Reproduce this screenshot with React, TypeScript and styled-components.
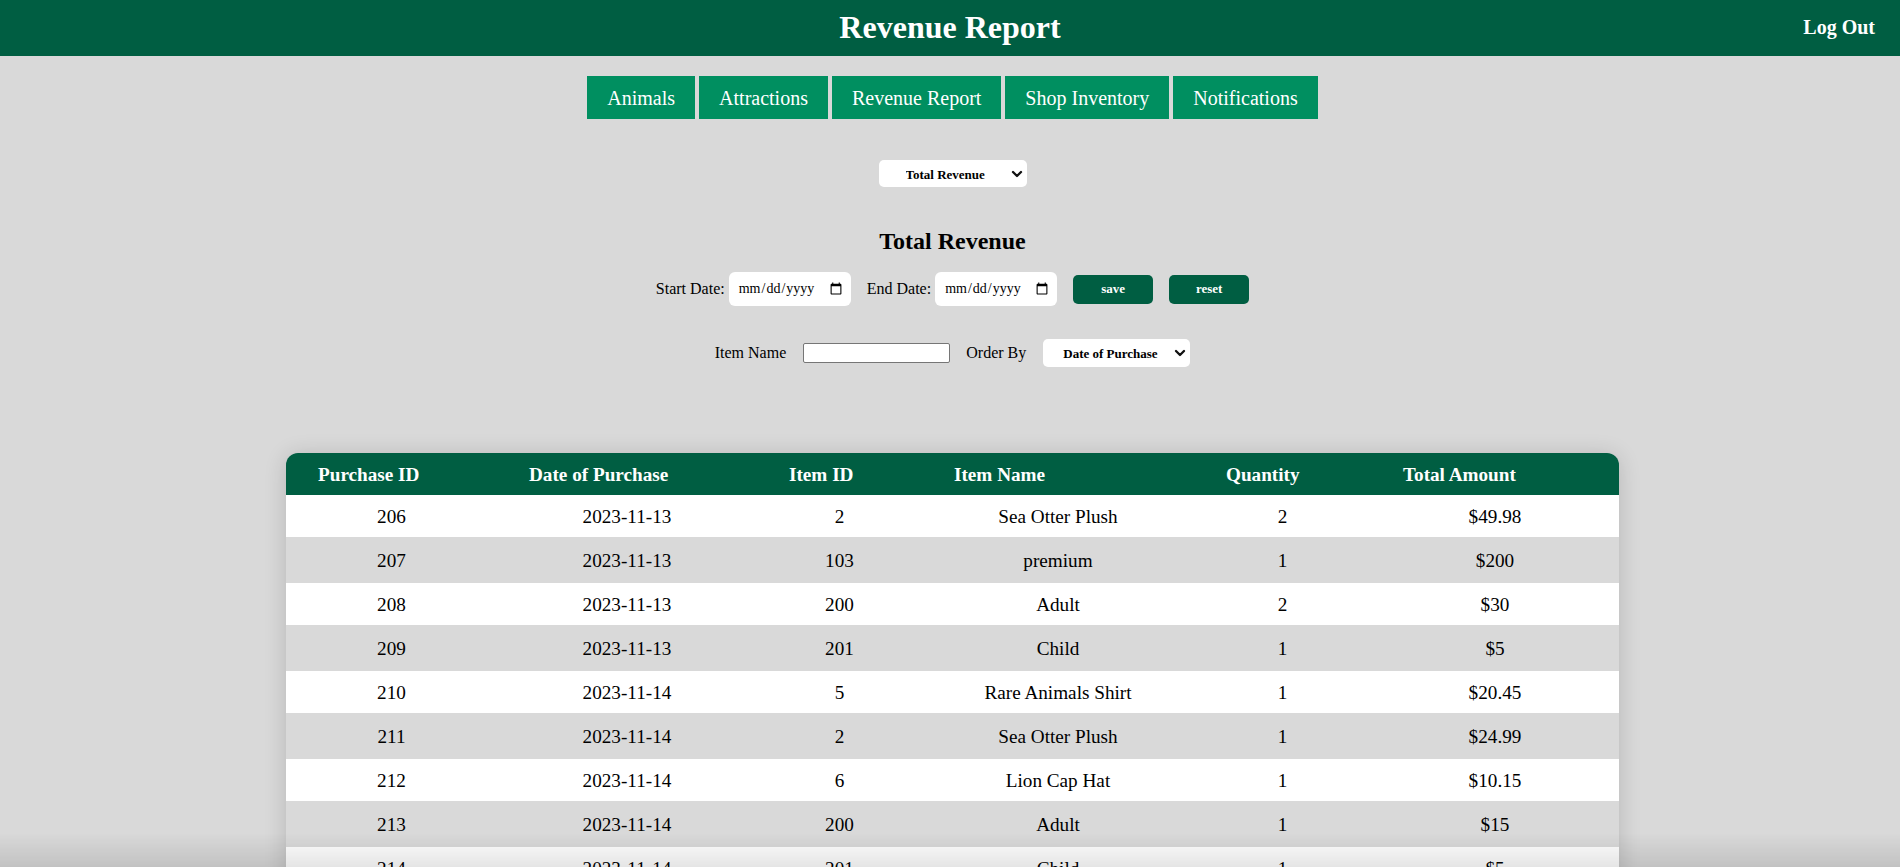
import React from "react";
import styled, { createGlobalStyle } from "styled-components";
import { ChevronDown } from "lucide-react";

const GlobalStyle = createGlobalStyle`
  html, body {
    margin: 0;
    padding: 0;
    background: #d9d9d9;
    font-family: "Liberation Serif", "Times New Roman", serif;
    color: #000;
  }
  * { box-sizing: border-box; }
`;

const TopBar = styled.header`
  height: 56px;
  background: #005e42;
  display: grid;
  grid-template-columns: 1fr auto 1fr;
  align-items: center;
  padding: 0 25px;
  color: #fff;
`;

const Title = styled.h1`
  grid-column: 2;
  margin: 0 0 2px;
  font-size: 32px;
  font-weight: bold;
`;

const LogOut = styled.a`
  grid-column: 3;
  justify-self: end;
  font-size: 20px;
  font-weight: bold;
  color: #fff;
  text-decoration: none;
  margin-bottom: 2px;
`;

const Main = styled.main`
  padding-left: 5px;
  display: flex;
  flex-direction: column;
  align-items: center;
`;

const Nav = styled.nav`
  margin-top: 20px;
  display: flex;
  gap: 4px;
`;

const NavButton = styled.button`
  background: #008f60;
  color: #fff;
  border: none;
  font-family: inherit;
  font-size: 20px;
  line-height: 23px;
  padding: 11px 20px 9px;
  cursor: pointer;
`;

const SelectWrap = styled.div<{ $w: number; $h: number; $mt: number }>`
  position: relative;
  width: ${(p) => p.$w}px;
  height: ${(p) => p.$h}px;
  margin-top: ${(p) => p.$mt}px;
`;

const Select = styled.select<{ $pl: number }>`
  appearance: none;
  -webkit-appearance: none;
  width: 100%;
  height: 100%;
  background: #fff;
  border: none;
  border-radius: 5px;
  font-family: inherit;
  font-weight: bold;
  font-size: 13px;
  color: #000;
  padding: 1px 24px 0 ${(p) => p.$pl}px;
  outline: none;
`;

const Chevron = styled(ChevronDown)`
  position: absolute;
  right: 2px;
  top: 50%;
  transform: translateY(-50%);
  pointer-events: none;
  color: #111;
`;

const SubTitle = styled.h2`
  margin: 41px 0 0;
  font-size: 24px;
  font-weight: bold;
`;

const Row = styled.div<{ $mt: number; $h: number }>`
  display: flex;
  align-items: center;
  margin-top: ${(p) => p.$mt}px;
  height: ${(p) => p.$h}px;
`;

const Label = styled.label<{ $ml?: number; $mr?: number }>`
  font-size: 16px;
  margin-left: ${(p) => p.$ml ?? 0}px;
  margin-right: ${(p) => p.$mr ?? 0}px;
`;

const DateInput = styled.input`
  width: 122px;
  height: 34px;
  border: none;
  border-radius: 6px;
  background: #fff;
  font-family: inherit;
  font-size: 14px;
  padding: 0 6px 0 9px;
  color: #000;
`;

const ActionButton = styled.button`
  width: 80px;
  height: 29px;
  margin-left: 16px;
  background: #005e42;
  color: #fff;
  border: none;
  border-radius: 5px;
  font-family: inherit;
  font-weight: bold;
  font-size: 13px;
  cursor: pointer;
`;

const TextInput = styled.input`
  width: 147px;
  height: 20px;
  border: 1px solid #767676;
  border-radius: 2px;
  background: #fff;
  font-family: inherit;
  font-size: 13px;
`;

const Table = styled.table`
  margin-top: 86px;
  width: 1333px;
  table-layout: fixed;
  border-collapse: separate;
  border-spacing: 0;
  border-radius: 12px 12px 0 0;
  overflow: hidden;
  box-shadow: 0 2px 22px rgba(0, 0, 0, 0.16);
  font-size: 19.2px;
`;

const Th = styled.th`
  background: #005e42;
  color: #fff;
  font-weight: bold;
  text-align: left;
  padding: 11px 0 9px 32px;
  line-height: 22px;
  white-space: nowrap;
`;

const Tr = styled.tr<{ $alt: boolean }>`
  background: ${(p) => (p.$alt ? "#d9d9d9" : "#ffffff")};
  & > td {
    padding: ${(p) => (p.$alt ? "13px 0 11px" : "11px 0 9px")};
  }
`;

const Td = styled.td`
  text-align: center;
  line-height: 22px;
`;

const BottomShade = styled.div`
  position: fixed;
  left: 0;
  right: 0;
  bottom: 0;
  height: 34px;
  pointer-events: none;
  background: linear-gradient(to bottom, rgba(0, 0, 0, 0), rgba(0, 0, 0, 0.1));
`;

const columns = [
  { label: "Purchase ID", width: 211 },
  { label: "Date of Purchase", width: 260 },
  { label: "Item ID", width: 165 },
  { label: "Item Name", width: 272 },
  { label: "Quantity", width: 177 },
  { label: "Total Amount", width: 248 },
];

const rows: [number, string, number, string, number, string][] = [
  [206, "2023-11-13", 2, "Sea Otter Plush", 2, "$49.98"],
  [207, "2023-11-13", 103, "premium", 1, "$200"],
  [208, "2023-11-13", 200, "Adult", 2, "$30"],
  [209, "2023-11-13", 201, "Child", 1, "$5"],
  [210, "2023-11-14", 5, "Rare Animals Shirt", 1, "$20.45"],
  [211, "2023-11-14", 2, "Sea Otter Plush", 1, "$24.99"],
  [212, "2023-11-14", 6, "Lion Cap Hat", 1, "$10.15"],
  [213, "2023-11-14", 200, "Adult", 1, "$15"],
  [214, "2023-11-14", 201, "Child", 1, "$5"],
  [215, "2023-11-15", 200, "Adult", 2, "$30"],
  [216, "2023-11-15", 3, "Penguin Mug", 1, "$12.50"],
];

export default function App() {
  return (
    <>
      <GlobalStyle />
      <TopBar>
        <Title>Revenue Report</Title>
        <LogOut href="#">Log Out</LogOut>
      </TopBar>
      <Main>
        <Nav>
          <NavButton>Animals</NavButton>
          <NavButton>Attractions</NavButton>
          <NavButton>Revenue Report</NavButton>
          <NavButton>Shop Inventory</NavButton>
          <NavButton>Notifications</NavButton>
        </Nav>

        <SelectWrap $w={148} $h={27} $mt={41}>
          <Select $pl={27} defaultValue="total">
            <option value="total">Total Revenue</option>
            <option value="shop">Shop Revenue</option>
            <option value="tickets">Ticket Revenue</option>
          </Select>
          <Chevron size={16} strokeWidth={3.5} />
        </SelectWrap>

        <SubTitle>Total Revenue</SubTitle>

        <Row $mt={17} $h={34}>
          <Label $mr={4}>Start Date:</Label>
          <DateInput type="date" />
          <Label $ml={16} $mr={4}>End Date:</Label>
          <DateInput type="date" />
          <ActionButton>save</ActionButton>
          <ActionButton>reset</ActionButton>
        </Row>

        <Row $mt={33} $h={28}>
          <Label $mr={17}>Item Name</Label>
          <TextInput type="text" />
          <Label $ml={16} $mr={17}>Order By</Label>
          <SelectWrap $w={147} $h={28} $mt={0}>
            <Select $pl={20} defaultValue="date">
              <option value="date">Date of Purchase</option>
              <option value="amount">Total Amount</option>
              <option value="qty">Quantity</option>
            </Select>
            <Chevron size={16} strokeWidth={3.5} />
          </SelectWrap>
        </Row>

        <Table>
          <colgroup>
            {columns.map((c) => (
              <col key={c.label} style={{ width: c.width }} />
            ))}
          </colgroup>
          <thead>
            <tr>
              {columns.map((c) => (
                <Th key={c.label}>{c.label}</Th>
              ))}
            </tr>
          </thead>
          <tbody>
            {rows.map((r, i) => (
              <Tr key={r[0]} $alt={i % 2 === 1}>
                {r.map((v, j) => (
                  <Td key={j}>{v}</Td>
                ))}
              </Tr>
            ))}
          </tbody>
        </Table>
      </Main>
      <BottomShade />
    </>
  );
}
